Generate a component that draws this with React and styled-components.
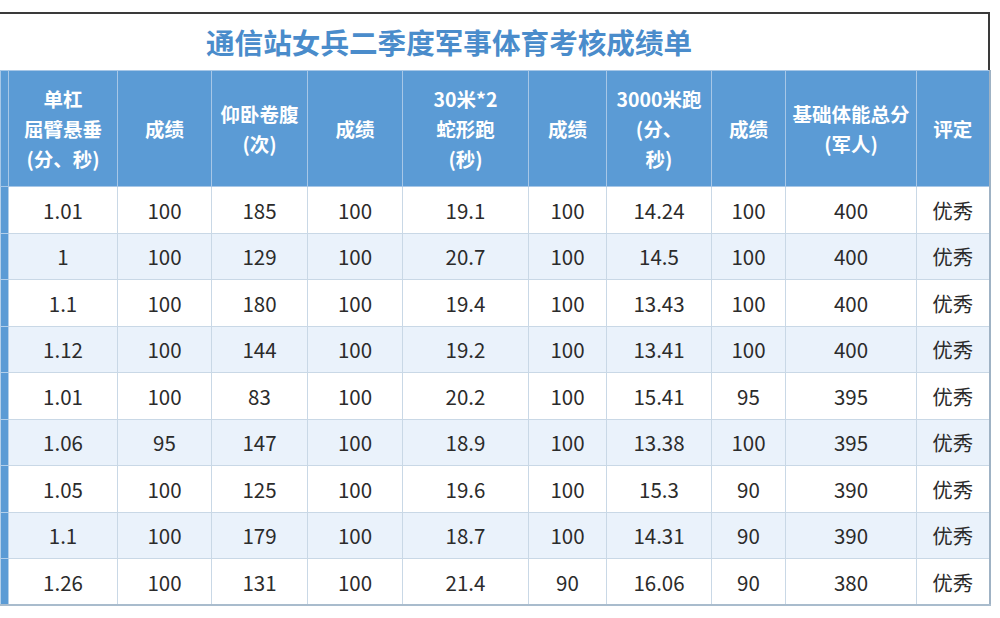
import React from "react";
import styled, { createGlobalStyle } from "styled-components";

const Global = createGlobalStyle`
  html, body { margin: 0; padding: 0; background: #ffffff; }
  body { font-family: "Noto Sans CJK SC", "Noto Sans", sans-serif; }
`;

const Page = styled.div`
  width: 1000px;
  height: 618px;
  padding-top: 12px;
  box-sizing: border-box;
  background: #fff;
  overflow: hidden;
`;

const Sheet = styled.div`
  width: 990px;
`;

const TitleBar = styled.div`
  height: 58px;
  box-sizing: border-box;
  border-top: 2px solid #3a3a3a;
  border-right: 2px solid #3a3a3a;
  display: flex;
  align-items: center;
  padding-left: 206px;
`;

const Title = styled.h1`
  margin: 0;
  font-size: 28.6px;
  font-weight: 700;
  color: #4a8ccb;
  line-height: 1;
`;

const Table = styled.table`
  width: 990px;
  table-layout: fixed;
  border-collapse: collapse;
  border-bottom: 2px solid #a9bccd;
  border-right: 2px solid #9fb2c4;
`;

const HeadRow = styled.tr`
  height: 116px;
`;

const HeadCell = styled.th`
  background: #5b9bd5;
  color: #ffffff;
  font-size: 19.5px;
  font-weight: 700;
  line-height: 30px;
  text-align: center;
  vertical-align: middle;
  padding: 0;
  border: 1px solid #a7c7e7;
  white-space: pre-line;
`;

const Row = styled.tr`
  height: 46.5px;
  background: ${(p) => (p.$alt ? "#eaf2fb" : "#ffffff")};
`;

const Strip = styled.td`
  background: #5b9bd5;
  border: 1px solid #b3cfea;
  padding: 0;
`;

const HeadStrip = styled.th`
  background: #5b9bd5;
  border: 1px solid #a7c7e7;
  padding: 0;
`;

const Cell = styled.td`
  font-size: 20.5px;
  color: #2b2b2b;
  text-align: center;
  vertical-align: middle;
  padding: 0;
  border: 1px solid #c9d8e6;
`;

const widths = [8, 109, 94, 96, 95, 126, 78, 105, 74, 131, 73];

const headers = [
  "单杠\n屈臂悬垂\n(分、秒)",
  "成绩",
  "仰卧卷腹\n(次)",
  "成绩",
  "30米*2\n蛇形跑\n(秒)",
  "成绩",
  "3000米跑\n(分、\n秒)",
  "成绩",
  "基础体能总分\n(军人)",
  "评定",
];

const rows = [
  ["1.01", "100", "185", "100", "19.1", "100", "14.24", "100", "400", "优秀"],
  ["1", "100", "129", "100", "20.7", "100", "14.5", "100", "400", "优秀"],
  ["1.1", "100", "180", "100", "19.4", "100", "13.43", "100", "400", "优秀"],
  ["1.12", "100", "144", "100", "19.2", "100", "13.41", "100", "400", "优秀"],
  ["1.01", "100", "83", "100", "20.2", "100", "15.41", "95", "395", "优秀"],
  ["1.06", "95", "147", "100", "18.9", "100", "13.38", "100", "395", "优秀"],
  ["1.05", "100", "125", "100", "19.6", "100", "15.3", "90", "390", "优秀"],
  ["1.1", "100", "179", "100", "18.7", "100", "14.31", "90", "390", "优秀"],
  ["1.26", "100", "131", "100", "21.4", "90", "16.06", "90", "380", "优秀"],
];

export default function App() {
  return (
    <Page>
      <Global />
      <Sheet>
        <TitleBar>
          <Title>通信站女兵二季度军事体育考核成绩单</Title>
        </TitleBar>
        <Table>
          <colgroup>
            {widths.map((w, i) => (
              <col key={i} style={{ width: w }} />
            ))}
          </colgroup>
          <thead>
            <HeadRow>
              <HeadStrip />
              {headers.map((h, i) => (
                <HeadCell key={i}>{h}</HeadCell>
              ))}
            </HeadRow>
          </thead>
          <tbody>
            {rows.map((r, i) => (
              <Row key={i} $alt={i % 2 === 1}>
                <Strip />
                {r.map((v, j) => (
                  <Cell key={j}>{v}</Cell>
                ))}
              </Row>
            ))}
          </tbody>
        </Table>
      </Sheet>
    </Page>
  );
}
